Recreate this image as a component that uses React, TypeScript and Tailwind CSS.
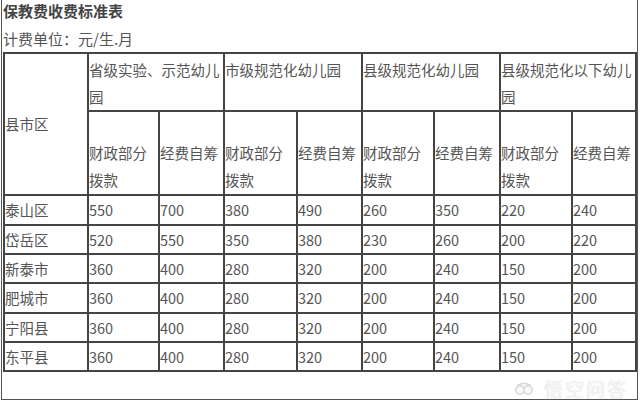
import { Fragment } from 'react';

const groups = ['省级实验、示范幼儿园', '市级规范化幼儿园', '县级规范化幼儿园', '县级规范化以下幼儿园'];

const rows: [string, ...number[]][] = [
  ['泰山区', 550, 700, 380, 490, 260, 350, 220, 240],
  ['岱岳区', 520, 550, 350, 380, 230, 260, 200, 220],
  ['新泰市', 360, 400, 280, 320, 200, 240, 150, 200],
  ['肥城市', 360, 400, 280, 320, 200, 240, 150, 200],
  ['宁阳县', 360, 400, 280, 320, 200, 240, 150, 200],
  ['东平县', 360, 400, 280, 320, 200, 240, 150, 200],
];

function WukongMark() {
  return (
    <svg width="20" height="14" viewBox="0 0 20 14" fill="none" stroke="#d6d6d6" strokeWidth="1.5">
      <circle cx="6" cy="8" r="4.2" fill="#f8f8f8" />
      <circle cx="14" cy="8" r="4.2" fill="#f8f8f8" />
      <path d="M3 3.5 Q10 -0.5 17 3.5" />
    </svg>
  );
}

export default function App() {
  return (
    <div className="h-[402px] w-[640px] overflow-hidden bg-white font-['Noto_Sans_CJK_SC','Microsoft_YaHei',sans-serif] text-[#555]">
      <div className="ml-[1px] flex h-[400px] w-[637px] flex-col border-x border-b border-[#555]">
        <div className="pl-[1px] text-[15px] font-bold leading-[22px] text-[#444]">保教费收费标准表</div>
        <div className="mt-[6px] pl-[1px] text-[15px] leading-[22px]">计费单位：元/生.月</div>

        <div className="mt-[2px] ml-[1px] grid w-[634px] grid-cols-[82px_69px_63px_71px_63px_70px_64px_70px_62px] grid-rows-[56px_82px_28px_27px_27px_28px_27px_27px] gap-[2px] bg-[#444] p-[2px] text-[14.5px]">
          <div className="row-span-2 flex items-center bg-white">县市区</div>
          {groups.map((g) => (
            <div key={g} className="col-span-2 bg-white pt-[2px] leading-[27px]">
              {g}
            </div>
          ))}
          {groups.map((g) => (
            <Fragment key={g}>
              <div className="bg-white pt-[27px] leading-[27px]">财政部分拨款</div>
              <div className="bg-white pt-[27px] leading-[27px] whitespace-nowrap">经费自筹</div>
            </Fragment>
          ))}
          {rows.map((r) =>
            r.map((v, i) => (
              <div key={r[0] + i} className="flex items-center bg-white">
                {v}
              </div>
            ))
          )}
        </div>

        <div className="mt-[6px] flex items-center justify-end gap-[10px] pr-[9px]">
          <WukongMark />
          <span className="text-[19px] leading-[22px] tracking-[2px] text-[#f8f8f8] [text-shadow:0_0_1px_#c4c4c4]">悟空问答</span>
        </div>
      </div>
    </div>
  );
}
